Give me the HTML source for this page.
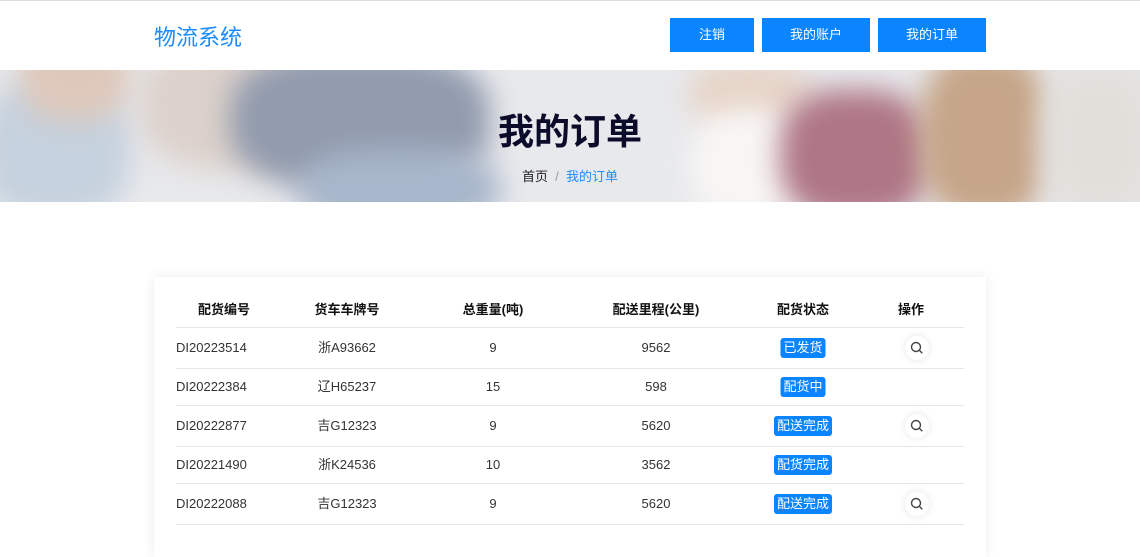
<!DOCTYPE html>
<html><head><meta charset="utf-8"><style>
*{margin:0;padding:0;box-sizing:border-box}
body{width:1140px;height:541px;overflow:hidden;background:#fff;font-family:"Liberation Sans","Noto Sans CJK SC",sans-serif;position:relative}
.top{position:absolute;top:0;left:0;width:1140px;height:70px;border-top:1px solid #ddd;background:#fff}
.logo{position:absolute;left:154px;top:19px;font-size:22px;color:#1a8cff}
.btn{position:absolute;top:17px;height:34px;background:#0a84ff;color:#fff;font-size:13px;line-height:34px;text-align:center}
.banner{position:absolute;top:70px;left:0;width:1140px;height:132px;overflow:hidden;background:#d9dbe0}
.b{position:absolute;border-radius:40%;filter:blur(14px)}
.ov{position:absolute;inset:0;background:rgba(255,255,255,.4)}
h1{position:absolute;top:103px;width:1140px;text-align:center;font-size:36px;color:#0b0b2a;font-weight:bold}
.crumb{position:absolute;top:166px;width:1140px;text-align:center;font-size:13px;color:#222}
.crumb span{color:#1a8cff}
.card{position:absolute;left:154px;top:277px;width:832px;height:280px;background:#fff;box-shadow:0 0 12px rgba(0,0,0,.08)}
.row{position:absolute;left:22px;width:788px;border-bottom:1px solid #e6e6e6}
.c{position:absolute;font-size:13px;line-height:18px;height:18px;color:#333;text-align:center;transform:translateX(-50%);white-space:nowrap}
.h .c{font-weight:bold;color:#111}
.tag{display:inline-block;background:#0a84ff;color:#fff;padding:0 3px;border-radius:3px;font-size:13px;line-height:20px;position:relative;top:-1px}
.s{width:24px;height:24px;border-radius:50%;box-shadow:0 0 8px rgba(0,0,0,.1);display:inline-block;position:relative;top:-3px}
</style></head><body>
<div class="top"><div class="logo">物流系统</div>
<div class="btn" style="left:670px;width:84px">注销</div>
<div class="btn" style="left:762px;width:108px">我的账户</div>
<div class="btn" style="left:878px;width:108px">我的订单</div></div>
<div class="banner">
<div class="b" style="left:-20px;top:10px;width:150px;height:140px;background:#9fb3c8"></div>
<div class="b" style="left:20px;top:-40px;width:110px;height:90px;background:#c9a48d"></div>
<div class="b" style="left:140px;top:-30px;width:200px;height:130px;background:#c5b3a8"></div>
<div class="b" style="left:230px;top:-20px;width:260px;height:140px;background:#4a5a78"></div>
<div class="b" style="left:300px;top:80px;width:200px;height:80px;background:#6e86a8"></div>
<div class="b" style="left:690px;top:-10px;width:120px;height:70px;background:#d7b8a2"></div>
<div class="b" style="left:690px;top:40px;width:120px;height:110px;background:#f4f0ee"></div>
<div class="b" style="left:780px;top:20px;width:150px;height:130px;background:#7a1c35"></div>
<div class="b" style="left:920px;top:-20px;width:130px;height:170px;background:#a06a3a"></div>
<div class="b" style="left:1040px;top:-10px;width:120px;height:160px;background:#cfcac4"></div>
<div class="ov"></div></div>
<h1>我的订单</h1>
<div class="crumb">首页 &nbsp;<span style="color:#999">/</span>&nbsp; <span>我的订单</span></div>
<div class="card">
<div class="row h" style="top:22px;height:29px"><div class="c" style="top:2px;left:48px">配货编号</div><div class="c" style="top:2px;left:171px">货车车牌号</div><div class="c" style="top:2px;left:317px">总重量(吨)</div><div class="c" style="top:2px;left:480px">配送里程(公里)</div><div class="c" style="top:2px;left:627px">配货状态</div><div class="c" style="top:2px;left:735px">操作</div></div>
<div class="row" style="top:51px;height:41px"><div class="c" style="top:11px;left:0;transform:none">DI20223514</div><div class="c" style="top:11px;left:171px">浙A93662</div><div class="c" style="top:11px;left:317px">9</div><div class="c" style="top:11px;left:480px">9562</div><div class="c" style="top:11px;left:627px"><span class="tag">已发货</span></div><div class="c" style="top:11px;left:741px"><span class="s"><svg width="24" height="24"><circle cx="11" cy="11" r="4.5" fill="none" stroke="#444" stroke-width="1.4"/><path d="M14.3 14.3l3 3" stroke="#444" stroke-width="1.4"/></svg></span></div></div>
<div class="row" style="top:92px;height:37px"><div class="c" style="top:9px;left:0;transform:none">DI20222384</div><div class="c" style="top:9px;left:171px">辽H65237</div><div class="c" style="top:9px;left:317px">15</div><div class="c" style="top:9px;left:480px">598</div><div class="c" style="top:9px;left:627px"><span class="tag">配货中</span></div></div>
<div class="row" style="top:129px;height:41px"><div class="c" style="top:11px;left:0;transform:none">DI20222877</div><div class="c" style="top:11px;left:171px">吉G12323</div><div class="c" style="top:11px;left:317px">9</div><div class="c" style="top:11px;left:480px">5620</div><div class="c" style="top:11px;left:627px"><span class="tag">配送完成</span></div><div class="c" style="top:11px;left:741px"><span class="s"><svg width="24" height="24"><circle cx="11" cy="11" r="4.5" fill="none" stroke="#444" stroke-width="1.4"/><path d="M14.3 14.3l3 3" stroke="#444" stroke-width="1.4"/></svg></span></div></div>
<div class="row" style="top:170px;height:37px"><div class="c" style="top:9px;left:0;transform:none">DI20221490</div><div class="c" style="top:9px;left:171px">浙K24536</div><div class="c" style="top:9px;left:317px">10</div><div class="c" style="top:9px;left:480px">3562</div><div class="c" style="top:9px;left:627px"><span class="tag">配货完成</span></div></div>
<div class="row" style="top:207px;height:41px"><div class="c" style="top:11px;left:0;transform:none">DI20222088</div><div class="c" style="top:11px;left:171px">吉G12323</div><div class="c" style="top:11px;left:317px">9</div><div class="c" style="top:11px;left:480px">5620</div><div class="c" style="top:11px;left:627px"><span class="tag">配送完成</span></div><div class="c" style="top:11px;left:741px"><span class="s"><svg width="24" height="24"><circle cx="11" cy="11" r="4.5" fill="none" stroke="#444" stroke-width="1.4"/><path d="M14.3 14.3l3 3" stroke="#444" stroke-width="1.4"/></svg></span></div></div>
</div>
</body></html>
